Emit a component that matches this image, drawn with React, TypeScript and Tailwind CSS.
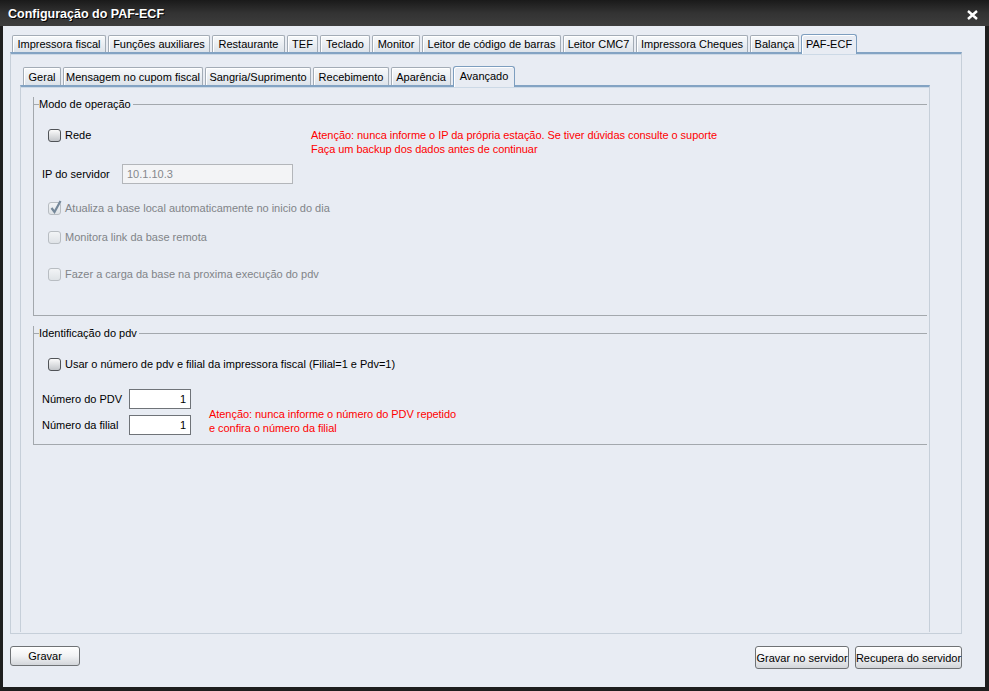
import React from "react";

const outerTabs: [string, number][] = [
  ["Impressora fiscal", 94],
  ["Funções auxiliares", 102],
  ["Restaurante", 73],
  ["TEF", 31],
  ["Teclado", 50],
  ["Monitor", 48],
  ["Leitor de código de barras", 139],
  ["Leitor CMC7", 71],
  ["Impressora Cheques", 112],
  ["Balança", 49],
  ["PAF-ECF", 56],
];

const innerTabs: [string, number][] = [
  ["Geral", 38],
  ["Mensagem no cupom fiscal", 140],
  ["Sangria/Suprimento", 106],
  ["Recebimento", 76],
  ["Aparência", 60],
  ["Avançado", 62],
];

function Tab({ label, width, selected, h }: { label: string; width: number; selected: boolean; h: "outer" | "inner" }) {
  if (selected) {
    return (
      <div
        style={{ width }}
        className={
          (h === "outer" ? "h-[20px] -mt-[1px] " : "h-[21px] -mt-[1px] ") +
          "relative border border-b-0 border-[#7d9ebf] rounded-t-[3px] bg-[#e8ecf3] flex items-start justify-center pt-[2px] leading-[14px] whitespace-nowrap shadow-[inset_1px_1px_0_#ffffff]"
        }
      >
        {label}
      </div>
    );
  }
  return (
    <div
      style={{ width }}
      className={
        (h === "outer" ? "h-[17px] " : "h-[18px] ") +
        "border border-b-0 border-[#a3acb6] rounded-t-[2px] bg-gradient-to-b from-[#f8fafc] to-[#dde3ea] flex items-center justify-center leading-[14px] whitespace-nowrap shadow-[inset_1px_1px_0_#ffffff]"
      }
    >
      {label}
    </div>
  );
}

function Check({ checked, disabled }: { checked?: boolean; disabled?: boolean }) {
  return (
    <span
      className={
        disabled
          ? "relative w-[13px] h-[13px] shrink-0 rounded-[3px] border border-[#b8bdc2] bg-gradient-to-b from-[#f2f4f6] to-[#dfe3e7]"
          : "relative w-[13px] h-[13px] shrink-0 rounded-[3px] border border-[#505357] bg-gradient-to-b from-[#fbfbfb] to-[#c3c6ca]"
      }
    >
      {checked && (
        <svg className="absolute -top-[3px] left-[1px]" width="12" height="14" viewBox="0 0 12 14">
          <path d="M1.5 8 L4.5 12 L10.5 1" stroke="#75889a" strokeWidth="2.2" fill="none" />
        </svg>
      )}
    </span>
  );
}

function Group({ title, children, className }: { title: string; children: React.ReactNode; className: string }) {
  return (
    <div className={"border-l border-b border-[#a3a8ad] " + className}>
      <div className="-mt-[7px] -ml-[9px] h-[15px] flex items-start">
        <div className="w-[6px] h-px bg-[#a3a8ad] mt-[7px]" />
        <span className="pr-[2px] leading-[15px]">{title}</span>
        <div className="flex-1 h-px bg-[#a3a8ad] mt-[7px]" />
      </div>
      {children}
    </div>
  );
}

function Button({ label, w, h }: { label: string; w: number; h: number }) {
  return (
    <div
      style={{ width: w, height: h }}
      className="border border-[#6f7275] rounded-[3px] bg-gradient-to-b from-[#ffffff] via-[#f1f2f4] to-[#d3d6da] flex items-center justify-center text-[11px] leading-[14px] whitespace-nowrap shadow-[inset_0_1px_0_#ffffff]"
    >
      {label}
    </div>
  );
}

export default function App() {
  return (
    <div className="w-[989px] h-[691px] bg-[#1e1e1e] flex flex-col font-['Liberation_Sans',Arial,sans-serif] text-[11px] text-black">
      <div className="h-[26px] shrink-0 flex items-center justify-between pl-[8px] pr-[11px] bg-gradient-to-b from-[#1a1a1a] via-[#333333] to-[#3d3d3d]">
        <span className="text-white font-bold text-[12.5px] leading-[16px] mt-[2px] [text-shadow:1px_1px_0_#000]">
          Configuração do PAF-ECF
        </span>
        <svg width="11" height="10" viewBox="0 0 11 10" className="mt-[4px]">
          <path d="M1 1 L10 9 M10 1 L1 9" stroke="white" strokeWidth="2.4" />
        </svg>
      </div>

      <div className="flex-1 ml-[3px] mr-[4px] mb-[4px] bg-[#e8ecf3] flex flex-col pl-[7px] pr-[23px] pt-[9px]">
        <div className="flex items-start gap-[2px] ml-[2px] h-[17px] relative z-10">
          {outerTabs.map(([l, w]) => (
            <Tab key={l} label={l} width={w} selected={l === "PAF-ECF"} h="outer" />
          ))}
        </div>

        <div className="h-[582px] shrink-0 border-t-2 border-t-[#83a3c3] border-x border-b border-x-[#c6cfd9] border-b-[#c6cfd9] shadow-[inset_0_1px_0_#ccd9e6] pl-[9px] pr-[31px] pt-[13px] pb-[1px] flex flex-col">
          <div className="flex items-start gap-[2px] ml-[3px] h-[18px] relative z-10">
            {innerTabs.map(([l, w]) => (
              <Tab key={l} label={l} width={w} selected={l === "Avançado"} h="inner" />
            ))}
          </div>

          <div className="flex-1 border-t-2 border-t-[#83a3c3] border-x border-x-[#c6cfd9] shadow-[inset_0_1px_0_#ccd9e6] pl-[12px] pr-[2px] pt-[17px]">
            <Group title="Modo de operação" className="pl-[8px] pb-[33px]">
              <div className="mt-[16px] flex items-start">
                <div className="ml-[6px] w-[263px] h-[14px] flex items-center gap-[4px]">
                  <Check />
                  <span className="leading-[14px]">Rede</span>
                </div>
                <div className="text-[#ff0000] leading-[14px] tracking-[-0.05px]">
                  <div>Atenção: nunca informe o IP da própria estação. Se tiver dúvidas consulte o suporte</div>
                  <div>Faça um backup dos dados antes de continuar</div>
                </div>
              </div>
              <div className="mt-[8px] flex items-center h-[20px]">
                <span className="w-[80px]">IP do servidor</span>
                <div className="w-[171px] h-[20px] border border-[#b3b6ba] bg-[#f3f4f6] text-[#85888c] pl-[4px] flex items-center">
                  10.1.10.3
                </div>
              </div>
              <div className="mt-[17px] ml-[6px] h-[15px] flex items-center gap-[4px] text-[#818488]">
                <Check checked disabled />
                <span>Atualiza a base local automaticamente no inicio do dia</span>
              </div>
              <div className="mt-[14px] ml-[6px] h-[15px] flex items-center gap-[4px] text-[#818488]">
                <Check disabled />
                <span>Monitora link da base remota</span>
              </div>
              <div className="mt-[22px] ml-[6px] h-[15px] flex items-center gap-[4px] text-[#818488]">
                <Check disabled />
                <span>Fazer a carga da base na proxima execução do pdv</span>
              </div>
            </Group>

            <Group title="Identificação do pdv" className="mt-[17px] pl-[8px] pb-[9px]">
              <div className="mt-[16px] ml-[6px] h-[15px] flex items-center gap-[4px]">
                <Check />
                <span>Usar o número de pdv e filial da impressora fiscal (Filial=1 e Pdv=1)</span>
              </div>
              <div className="mt-[17px] flex items-start">
                <div className="flex flex-col gap-[6px]">
                  <div className="flex items-center h-[20px]">
                    <span className="w-[87px]">Número do PDV</span>
                    <div className="w-[62px] h-[20px] border border-[#6f7378] bg-white pr-[4px] flex items-center justify-end">1</div>
                  </div>
                  <div className="flex items-center h-[20px]">
                    <span className="w-[87px]">Número da filial</span>
                    <div className="w-[62px] h-[20px] border border-[#6f7378] bg-white pr-[4px] flex items-center justify-end">1</div>
                  </div>
                </div>
                <div className="ml-[18px] mt-[18px] text-[#ff0000] leading-[14px] tracking-[-0.05px]">
                  <div>Atenção: nunca informe o número do PDV repetido</div>
                  <div>e confira o número da filial</div>
                </div>
              </div>
            </Group>
          </div>
        </div>

        <div className="mt-[12px] flex items-start justify-between">
          <Button label="Gravar" w={70} h={20} />
          <div className="flex gap-[6px]">
            <Button label="Gravar no servidor" w={94} h={23} />
            <Button label="Recupera do servidor" w={107} h={23} />
          </div>
        </div>
      </div>
    </div>
  );
}
